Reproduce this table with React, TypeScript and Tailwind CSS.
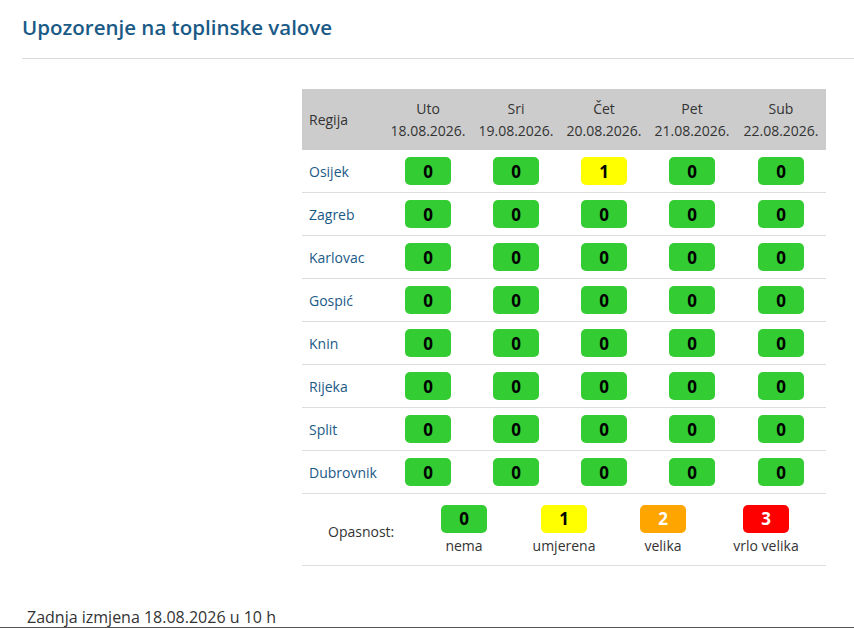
import React from "react";

const days = [
  { d: "Uto", date: "18.08.2026.", w: "w-[88px]" },
  { d: "Sri", date: "19.08.2026.", w: "w-[88px]" },
  { d: "Čet", date: "20.08.2026.", w: "w-[88px]" },
  { d: "Pet", date: "21.08.2026.", w: "w-[88px]" },
  { d: "Sub", date: "22.08.2026.", w: "w-[90px]" },
];

const rows: { name: string; v: number[] }[] = [
  { name: "Osijek", v: [0, 0, 1, 0, 0] },
  { name: "Zagreb", v: [0, 0, 0, 0, 0] },
  { name: "Karlovac", v: [0, 0, 0, 0, 0] },
  { name: "Gospić", v: [0, 0, 0, 0, 0] },
  { name: "Knin", v: [0, 0, 0, 0, 0] },
  { name: "Rijeka", v: [0, 0, 0, 0, 0] },
  { name: "Split", v: [0, 0, 0, 0, 0] },
  { name: "Dubrovnik", v: [0, 0, 0, 0, 0] },
];

function Badge({ v }: { v: number }) {
  const cls =
    v === 0
      ? "bg-[#33cc33] text-black"
      : v === 1
      ? "bg-[#ffff00] text-black"
      : v === 2
      ? "bg-[#ffa500] text-white"
      : "bg-[#ff0000] text-white";
  return (
    <div
      className={`${cls} w-[46px] h-[28px] rounded-[5px] flex items-center justify-center text-[17px] font-bold leading-none`}
    >
      {v}
    </div>
  );
}

export default function App() {
  return (
    <div
      className="w-[854px] h-[628px] bg-white text-[#333333] overflow-hidden flex flex-col"
      style={{ fontFamily: '"Open Sans", "Noto Sans", sans-serif' }}
    >
      <div className="pl-[22px]">
        <h1 className="text-[20.5px] font-semibold text-[#1a5a86] pt-[13px] leading-[28px] h-[58px]">
          Upozorenje na toplinske valove
        </h1>
        <div className="border-t border-[#d9d9d9]" />
        <div className="pt-[30px] pl-[280px]">
          <div className="w-[524px] text-[14px]">
            <div className="flex bg-[#cccccc] h-[61px] items-center">
              <div className="w-[82px] pl-[7px] leading-[22px]">Regija</div>
              {days.map((d) => (
                <div key={d.date} className={`${d.w} text-center leading-[22px]`}>
                  <div>{d.d}</div>
                  <div>{d.date}</div>
                </div>
              ))}
            </div>
            {rows.map((r) => (
              <div
                key={r.name}
                className="flex h-[43px] items-center border-b border-[#dddddd]"
              >
                <div className="w-[82px] pl-[7px] text-[#1a5a86]">{r.name}</div>
                {r.v.map((v, i) => (
                  <div key={i} className={`${days[i].w} flex justify-center`}>
                    <Badge v={v} />
                  </div>
                ))}
              </div>
            ))}
            <div className="flex h-[72px] items-center border-b border-[#dddddd]">
              <div className="w-[112px] pl-[26px] pt-[4px]">Opasnost:</div>
              {[
                { v: 0, l: "nema", w: "w-[100px]" },
                { v: 1, l: "umjerena", w: "w-[100px]" },
                { v: 2, l: "velika", w: "w-[98px]" },
                { v: 3, l: "vrlo velika", w: "w-[108px]" },
              ].map((x) => (
                <div key={x.v} className={`${x.w} flex flex-col items-center pt-[2px]`}>
                  <Badge v={x.v} />
                  <div className="leading-[22px] mt-[2px]">{x.l}</div>
                </div>
              ))}
            </div>
          </div>
        </div>
      </div>
      <div className="flex-1" />
      <div className="pl-[27px] text-[16px] leading-[20px]">
        Zadnja izmjena 18.08.2026 u 10 h
      </div>
      <div className="border-t border-[#555555]" />
    </div>
  );
}
